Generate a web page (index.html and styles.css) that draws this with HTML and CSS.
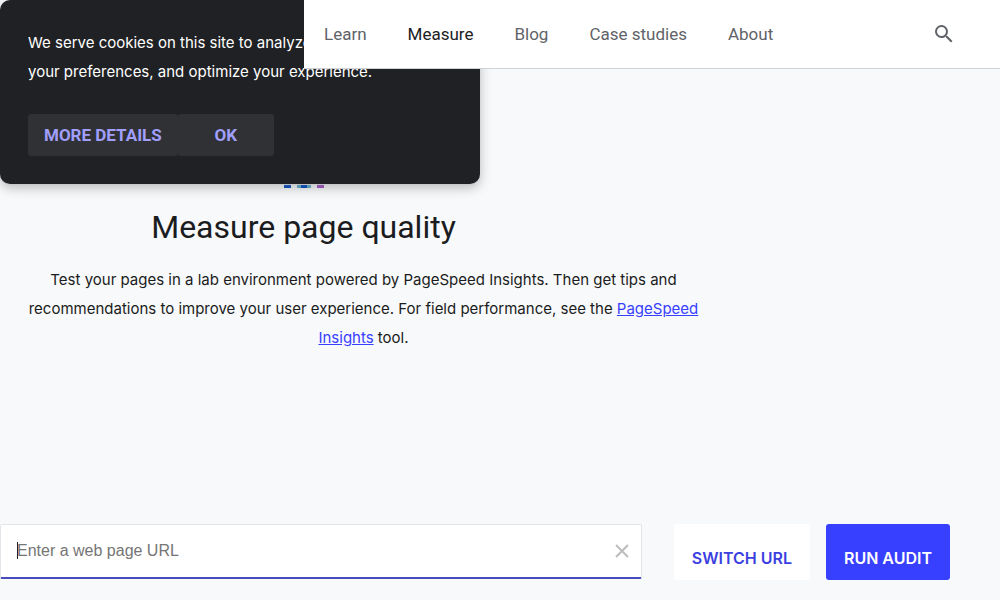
FILE: index.html
```
<!DOCTYPE html>
<html lang="en">
<head>
<meta charset="utf-8">
<meta name="viewport" content="width=device-width, initial-scale=1">
<title>Measure page quality</title>
<link rel="stylesheet" href="styles.css">
</head>
<body>
<header class="header">
  <nav class="nav" aria-label="Main">
    <a class="nav-link" href="#learn">Learn</a>
    <a class="nav-link nav-link-active" href="#measure" aria-current="page">Measure</a>
    <a class="nav-link" href="#blog">Blog</a>
    <a class="nav-link" href="#case-studies">Case studies</a>
    <a class="nav-link" href="#about">About</a>
  </nav>
  <button class="icon-button" type="button" aria-label="Search">
    <svg width="24" height="24" viewBox="0 0 24 24" aria-hidden="true"><path fill="currentColor" d="M15.500 14h-.79l-.28-.27A6.470 6.470 0 0 0 16 9.500 6.500 6.500 0 1 0 9.500 16c1.610 0 3.090-.59 4.230-1.570l.27.28v.79l5 4.990L20.490 19l-4.990-5zm-6 0C7.010 14 5 11.990 5 9.500S7.010 5 9.500 5 14 7.010 14 9.500 11.990 14 9.500 14z"/></svg>
  </button>
</header>
<section class="cookies" aria-label="Cookie notice">
  <p class="cookies-text">We serve cookies on this site to analyze traffic, remember your preferences, and optimize your experience.</p>
  <div class="cookies-actions">
    <button class="cookies-button" type="button">MORE DETAILS</button>
    <button class="cookies-button cookies-ok" type="button">OK</button>
  </div>
</section>
<main>
  <section class="hero">
    <div class="hero-title">
      <svg class="hero-icon" width="40" height="40" viewBox="0 0 40 40" aria-hidden="true">
        <path fill="#1456c4" d="M0 20h7v20H0z"/>
        <path fill="#69b5cf" d="M13 10h14v30H13z"/>
        <path fill="#1456c4" d="M17 10h6v30h-6z"/>
        <path fill="#a85fc9" d="M33 4h7v36h-7z"/>
      </svg>
      <h1 class="title">Measure page quality</h1>
    </div>
    <p class="intro">Test your pages in a lab environment powered by PageSpeed Insights. Then get tips and recommendations to improve your user experience. For field performance, see the <a class="link" href="#pagespeed">PageSpeed Insights</a> tool.</p>
  </section>
  <form class="audit">
    <div class="field">
      <input class="field-input" type="text" placeholder="Enter a web page URL" aria-label="Web page URL" autofocus>
      <button class="field-clear" type="button" aria-label="Clear">
        <svg width="14" height="14" viewBox="0 0 14 14" aria-hidden="true"><path d="M1 1l12 12M13 1L1 13" stroke="currentColor" stroke-width="2" fill="none"/></svg>
      </button>
    </div>
    <div class="audit-actions">
      <button class="button" type="button">SWITCH URL</button>
      <button class="button button-primary" type="button">RUN AUDIT</button>
    </div>
  </form>
</main>
</body>
</html>
```
FILE: styles.css
```
* { box-sizing: border-box; }
body {
  margin: 0;
  background: #f8f9fb;
  color: #1a1c20;
  font: 15px/29px Inter, "Liberation Sans", sans-serif;
}
button { border: 0; cursor: pointer; font: inherit; }
.header {
  position: relative;
  z-index: 2;
  display: flex;
  align-items: center;
  justify-content: space-between;
  margin-left: 304px;
  padding: 0 40px 0 20px;
  height: 69px;
  background: #fff;
  border-bottom: 1px solid #d0d2d6;
}
.nav { display: flex; gap: 41px; }
.nav-link {
  color: #5f6368;
  font-family: Roboto, sans-serif;
  font-size: 17px;
  text-decoration: none;
}
.nav-link-active { color: #202124; }
.icon-button {
  display: flex;
  padding: 4px;
  background: none;
  color: #5f6368;
}
.cookies {
  position: absolute;
  z-index: 1;
  top: 0;
  left: 0;
  width: 480px;
  max-width: 100%;
  padding: 28px;
  border-radius: 10px;
  background: #202124;
  color: #fff;
  box-shadow: 0 1px 1px #c8c9cb, 0 4px 12px rgba(0, 0, 0, .25);
}
.cookies-text { margin: 0 0 28px; }
.cookies-actions { display: flex; }
.cookies-button {
  height: 42px;
  padding: 0 16px;
  border-radius: 3px;
  background: #303135;
  color: #a19ffc;
  font-family: Roboto, sans-serif;
  font-size: 17px;
  font-weight: 700;
}
.cookies-ok { min-width: 96px; }
.hero {
  display: grid;
  justify-items: start;
  gap: 18px;
  padding-top: 79px;
  text-align: center;
}
.hero-title {
  display: grid;
  justify-items: center;
  gap: 19px;
  width: 100%;
  max-width: 607px;
}
.hero-icon { display: block; }
.title { margin: 0; font: 400 32px/40px Roboto, sans-serif; }
.intro { width: 100%; max-width: 727px; margin: 0; padding: 0 16px; }
.link { color: #3740ff; }
.audit {
  display: flex;
  gap: 32px;
  padding: 172px 50px 20px 0;
}
.field {
  display: flex;
  flex: 1;
  align-items: center;
  height: 55px;
  padding-right: 12px;
  border: 1px solid #e2e5ea;
  border-bottom: 2px solid #474bbd;
  border-radius: 2px;
  background: #fff;
}
.field-input {
  flex: 1;
  min-width: 0;
  padding: 0 16px;
  border: 0;
  outline: 0;
  background: linear-gradient(#202124, #202124) 16px 4px / 1px 17px no-repeat;
  caret-color: transparent;
  font: 16px/26px "Liberation Sans", Arial, sans-serif;
}
.field-input::placeholder { color: #757575; }
.field-clear { display: flex; padding: 0; background: none; color: #bdbdbd; }
.audit-actions { display: flex; gap: 16px; }
.button {
  height: 56px;
  padding: 12px 18px 0;
  border-radius: 3px;
  background: #fff;
  color: #3c3fe0;
  font-size: 16px;
  font-weight: 600;
}
.button-primary { background: #3740ff; color: #fff; }
```
